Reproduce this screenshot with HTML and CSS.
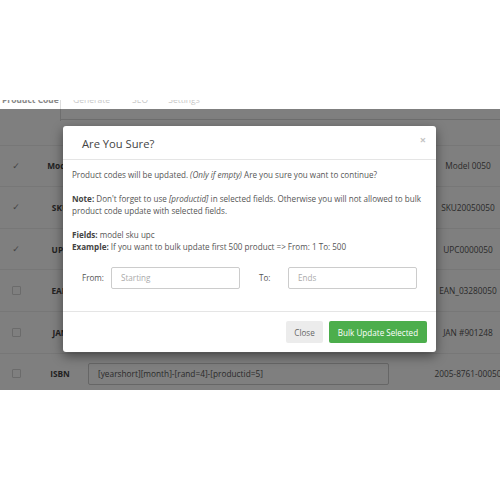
FILE: index.html
```
<!DOCTYPE html>
<html>
<head>
<meta charset="utf-8">
<link rel="stylesheet" href="styles.css">
</head>
<body>
<div class="screen">
  <div class="tabs">
    <div class="tab active"><span class="tab-label">Product Code</span></div>
    <div class="tab t2"><span class="tab-label">Generate</span></div>
    <div class="tab t3"><span class="tab-label">SEO</span></div>
    <div class="tab t4"><span class="tab-label">Settings</span></div>
  </div>
  <div class="table">
    <div class="thead"></div>
    <div class="row">
      <div class="cell chk"><span class="check">✓</span></div>
      <div class="cell label">Model</div>
      <div class="cell field"></div>
      <div class="cell value">Model 0050</div>
    </div>
    <div class="row">
      <div class="cell chk"><span class="check">✓</span></div>
      <div class="cell label">SKU</div>
      <div class="cell field"></div>
      <div class="cell value">SKU20050050</div>
    </div>
    <div class="row">
      <div class="cell chk"><span class="check">✓</span></div>
      <div class="cell label">UPC</div>
      <div class="cell field"></div>
      <div class="cell value">UPC0000050</div>
    </div>
    <div class="row">
      <div class="cell chk"><span class="box"></span></div>
      <div class="cell label">EAN</div>
      <div class="cell field"></div>
      <div class="cell value">EAN_03280050</div>
    </div>
    <div class="row">
      <div class="cell chk"><span class="box"></span></div>
      <div class="cell label">JAN</div>
      <div class="cell field"></div>
      <div class="cell value">JAN #901248</div>
    </div>
    <div class="row">
      <div class="cell chk"><span class="box"></span></div>
      <div class="cell label">ISBN</div>
      <div class="cell field"><div class="fake-input">[yearshort][month]-[rand=4]-[productid=5]</div></div>
      <div class="cell value">2005-8761-00050</div>
    </div>
  </div>
  <div class="backdrop"></div>
  <div class="modal">
    <div class="modal-header">
      <span class="modal-title">Are You Sure?</span>
      <span class="modal-close">×</span>
    </div>
    <div class="modal-body">
      <p>Product codes will be updated. <i>(Only if empty)</i> Are you sure you want to continue?</p>
      <p><b>Note:</b> Don't forget to use <i>[productid]</i> in selected fields. Otherwise you will not allowed to bulk product code update with selected fields.</p>
      <p class="tight"><b>Fields:</b> model sku upc</p>
      <p><b>Example:</b> If you want to bulk update first 500 product =&gt; From: 1 To: 500</p>
      <div class="range">
        <label class="range-label">From:</label>
        <div class="input">Starting</div>
        <label class="range-label to">To:</label>
        <div class="input">Ends</div>
      </div>
    </div>
    <div class="modal-footer">
      <button class="btn btn-default">Close</button>
      <button class="btn btn-success">Bulk Update Selected</button>
    </div>
  </div>
</div>
</body>
</html>
```
FILE: styles.css
```
html, body {
  margin: 0;
  padding: 0;
  background: #fff;
}
body {
  font-family: "Open Sans", "DejaVu Sans", sans-serif;
  color: #555;
}
.screen {
  position: relative;
  margin-top: 100px;
  height: 290px;
  overflow: hidden;
  width: 500px;
}
.tabs {
  display: flex;
  height: 19px;
  border-bottom: 1px solid #ddd;
}
.tab {
  display: flex;
  align-items: flex-start;
  justify-content: center;
  box-sizing: border-box;
  font-size: 8.5px;
  color: #c8c8c8;
  height: 20px;
}
.tab.active {
  width: 61px;
  justify-content: flex-start;
  padding-left: 2px;
  border-right: 1px solid #ddd;
  color: #888;
  font-weight: 700;
  background: #fff;
  height: 21px;
}
.tab.t2 { width: 61px; }
.tab.t3 { width: 36px; }
.tab.t4 { width: 52px; }
.tab-label {
  margin-top: -6px;
  white-space: nowrap;
  line-height: 11px;
}
.thead {
  height: 25.6px;
  border-bottom: 1px solid #eee;
  box-sizing: border-box;
}
.row {
  display: grid;
  grid-template-columns: 32px 56px 312px 136px;
  height: 41.6px;
  border-bottom: 1px solid #eee;
  box-sizing: border-box;
  align-items: center;
  font-size: 8.3px;
}
.cell.chk {
  display: flex;
  justify-content: center;
}
.check {
  font-size: 9px;
  color: #888;
  line-height: 10px;
}
.box {
  width: 7px;
  height: 7px;
  border: 1px solid #d6d6d6;
  border-radius: 1px;
}
.cell.label {
  text-align: center;
  font-weight: 700;
  color: #444;
}
.fake-input {
  width: 301px;
  height: 22px;
  box-sizing: border-box;
  border: 1px solid #ccc;
  border-radius: 2px;
  padding: 0 9px;
  line-height: 20px;
  font-size: 8.3px;
  color: #555;
}
.cell.value {
  text-align: center;
  color: #555;
  white-space: nowrap;
}
.backdrop {
  position: absolute;
  left: 0;
  right: 0;
  top: 9px;
  bottom: 0;
  background: rgba(0, 0, 0, 0.5);
}
.modal {
  position: absolute;
  left: 63px;
  top: 26px;
  width: 373px;
  background: #fff;
  border-radius: 3px;
  box-shadow: 0 4px 12px rgba(0, 0, 0, 0.45);
}
.modal-header {
  height: 34px;
  border-bottom: 1px solid #e5e5e5;
  display: flex;
  align-items: center;
  justify-content: space-between;
  padding: 0 10px 0 19px;
  box-sizing: border-box;
}
.modal-title {
  font-size: 11.2px;
  color: #444;
  margin-top: 1px;
}
.modal-close {
  font-size: 11px;
  color: #c4c4c4;
  font-weight: 700;
  margin-top: -6px;
}
.modal-body {
  padding: 9px 9px 22px 9px;
  font-size: 8.1px;
  line-height: 12px;
  color: #555;
}
.modal-body p {
  margin: 0 0 12px 0;
}
.modal-body p.tight {
  margin-bottom: 0;
}
.modal-body b {
  color: #444;
}
.range {
  display: flex;
  align-items: center;
  margin-top: 14px;
  padding-left: 10px;
}
.range-label {
  width: 29px;
  font-size: 8.1px;
  color: #555;
}
.range-label.to {
  width: 29px;
  margin-left: 19px;
}
.input {
  width: 129px;
  height: 22px;
  box-sizing: border-box;
  border: 1px solid #ccc;
  border-radius: 2px;
  padding: 0 9px;
  line-height: 20px;
  color: #aaa;
  font-size: 8.1px;
}
.modal-footer {
  border-top: 1px solid #e5e5e5;
  padding: 9px;
  display: flex;
  justify-content: flex-end;
  gap: 6px;
}
.btn {
  font-family: "Open Sans", "DejaVu Sans", sans-serif;
  font-size: 8.1px;
  height: 22px;
  border: 0;
  border-radius: 2px;
  padding: 0;
}
.btn-default {
  background: #ececec;
  color: #666;
  width: 37px;
}
.btn-success {
  background: #4cae4c;
  color: #fff;
  width: 98px;
}
```
